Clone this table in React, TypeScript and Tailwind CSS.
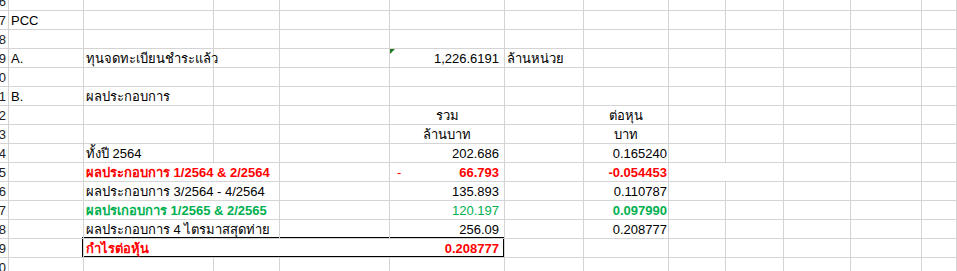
import React from 'react';

type Cell = {
  text?: string;
  align?: 'left' | 'right' | 'center';
  color?: string;
  bold?: boolean;
};

type Row = {
  num: number;
  cells?: Record<number, Cell>;
  hideRight?: number[];
  merged?: boolean;
  flag?: boolean;
  dash?: boolean;
  box?: boolean;
};

const RED = 'text-[#ff0000]';
const GREEN = 'text-[#00b050]';

// grid column starts, written out so tailwind picks them up
const COL_START = [
  'col-start-1',
  'col-start-2',
  'col-start-3',
  'col-start-4',
  'col-start-5',
  'col-start-6',
  'col-start-7',
  'col-start-8',
  'col-start-9',
  'col-start-10',
  'col-start-11',
  'col-start-12',
  'col-start-13',
];

const rows: Row[] = [
  { num: 6 },
  { num: 7, cells: { 1: { text: 'PCC' } } },
  { num: 8 },
  {
    num: 9,
    flag: true,
    cells: {
      1: { text: 'A.' },
      2: { text: 'ทุนจดทะเบียนชำระแล้ว' },
      5: { text: '1,226.6191', align: 'right' },
      6: { text: 'ล้านหน่วย' },
    },
  },
  { num: 10 },
  { num: 11, cells: { 1: { text: 'B.' }, 2: { text: 'ผลประกอบการ' } } },
  { num: 12, cells: { 5: { text: 'รวม', align: 'center' }, 7: { text: 'ต่อหุน', align: 'center' } } },
  { num: 13, cells: { 5: { text: 'ล้านบาท', align: 'center' }, 7: { text: 'บาท', align: 'center' } } },
  {
    num: 14,
    cells: {
      2: { text: 'ทั้งปี 2564' },
      5: { text: '202.686', align: 'right' },
      7: { text: '0.165240', align: 'right' },
    },
  },
  {
    num: 15,
    hideRight: [2, 8],
    dash: true,
    cells: {
      2: { text: 'ผลประกอบการ 1/2564 & 2/2564', color: RED, bold: true },
      5: { text: '66.793', align: 'right', color: RED, bold: true },
      7: { text: '-0.054453', align: 'right', color: RED, bold: true },
    },
  },
  {
    num: 16,
    hideRight: [2],
    cells: {
      2: { text: 'ผลประกอบการ 3/2564 - 4/2564' },
      5: { text: '135.893', align: 'right' },
      7: { text: '0.110787', align: 'right' },
    },
  },
  {
    num: 17,
    hideRight: [2],
    cells: {
      2: { text: 'ผลปรเกอบการ 1/2565 & 2/2565', color: GREEN, bold: true },
      5: { text: '120.197', align: 'right', color: GREEN },
      7: { text: '0.097990', align: 'right', color: GREEN, bold: true },
    },
  },
  {
    num: 18,
    hideRight: [2],
    cells: {
      2: { text: 'ผลประกอบการ 4 ไตรมาสสุดท่าย' },
      5: { text: '256.09', align: 'right' },
      7: { text: '0.208777', align: 'right' },
    },
  },
  {
    num: 19,
    merged: true,
    box: true,
    cells: {
      2: { text: 'กำไรต่อหุ้น', color: RED, bold: true },
      5: { text: '0.208777', align: 'right', color: RED, bold: true },
    },
  },
  { num: 20 },
];

const cols = 13;

function padFor(col: number, align?: string) {
  if (align === 'right') return col === 5 ? 'pr-[5px]' : 'pr-[1px]';
  if (align === 'center') return '';
  return 'pl-[2px]';
}

function SheetRow({ row, first }: { row: Row; first: boolean }) {
  const h = first ? 'h-[11px]' : 'h-[19px]';
  const items: React.ReactNode[] = [];

  for (let c = 0; c < cols; c++) {
    if (row.merged && (c === 3 || c === 4)) continue;
    const cell = row.cells?.[c];
    const hide = row.hideRight?.includes(c) || (row.merged && c === 2);
    const alignCls =
      cell?.align === 'right' ? 'justify-end' : cell?.align === 'center' ? 'justify-center' : 'justify-start';

    if (c === 0) {
      items.push(
        <div
          key={c}
          className={`${h} col-start-1 row-start-1 flex justify-end overflow-hidden border-r border-b border-[#d4d4d4] pr-[2px] leading-[19px] text-[#222]`}
        >
          {first ? <span className="-mt-[8px]">{row.num}</span> : row.num}
        </div>
      );
      continue;
    }

    items.push(
      <div
        key={c}
        className={`${h} ${COL_START[c]} row-start-1 relative flex ${alignCls} ${padFor(c, cell?.align)} border-b border-[#d4d4d4] ${
          hide ? '' : 'border-r'
        } ${row.merged && c === 2 ? 'col-span-3' : ''} whitespace-nowrap leading-[19px] ${cell?.color ?? 'text-black'} ${
          cell?.bold ? 'font-bold' : ''
        }`}
      >
        {row.flag && c === 5 && (
          <span className="absolute left-0 top-0 h-0 w-0 border-t-[5px] border-r-[5px] border-t-[#1f7a1f] border-r-transparent" />
        )}
        {row.dash && c === 5 && <span className="absolute left-[7px] top-0 font-normal">-</span>}
        {cell?.text}
      </div>
    );
  }

  if (row.box) {
    items.push(
      <div
        key="box"
        className="pointer-events-none col-start-3 col-end-7 row-start-1 -ml-[2px] -mt-[2px] border-2 border-black"
      />
    );
  }

  return (
    <div className="grid grid-cols-[9px_75px_130px_66px_110px_115px_79px_85px_57px_58px_67px_71px_1fr]">
      {items}
    </div>
  );
}

export default function App() {
  return (
    <div
      className="h-[271px] w-[957px] overflow-hidden bg-white text-[13px]"
      style={{ fontFamily: '"Liberation Sans", Arial, "Noto Sans", sans-serif' }}
    >
      {rows.map((row, i) => (
        <SheetRow key={row.num} row={row} first={i === 0} />
      ))}
    </div>
  );
}
